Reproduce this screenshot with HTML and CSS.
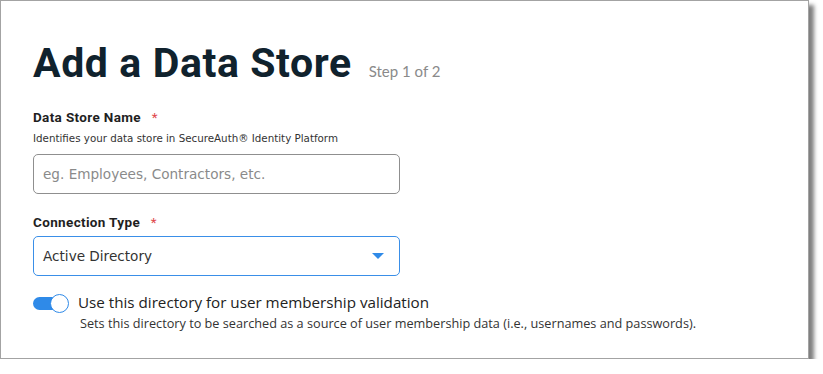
FILE: index.html
```html
<!DOCTYPE html>
<html lang="en">
<head>
    <meta charset="UTF-8">
    <title>Add a Data Store</title>
    <link rel="stylesheet" href="styles.css">
</head>
<body>
<div class="panel">
    <!-- Title -->
    <div class="title-row">
        <h1>Add a Data Store</h1>
        <span class="step">Step 1 of 2</span>
    </div>

    <!-- Name field -->
    <div class="field">
        <label class="field-label">Data Store Name <span class="req">*</span></label>
        <p class="hint">Identifies your data store in SecureAuth® Identity Platform</p>
        <div class="input">eg. Employees, Contractors, etc.</div>
    </div>

    <!-- Connection type -->
    <div class="field">
        <label class="field-label">Connection Type <span class="req">*</span></label>
        <div class="select">
            <span>Active Directory</span>
            <svg class="caret" width="12" height="6" viewBox="0 0 12 6"><path d="M0 0h12L6 6z" fill="#2f8ae8"/></svg>
        </div>
    </div>

    <!-- Membership toggle -->
    <div class="toggle-row">
        <span class="toggle"><span class="knob"></span></span>
        <div class="toggle-text">
            <div class="toggle-title">Use this directory for user membership validation</div>
            <div class="toggle-desc">Sets this directory to be searched as a source of user membership data (i.e., usernames and passwords).</div>
        </div>
    </div>
</div>
</body>
</html>
```

FILE: styles.css
```css
* { box-sizing: border-box; }
body {
  margin: 0;
  background: #fff;
  font-family: 'DejaVu Sans', sans-serif;
  color: #1b2a33;
}
/* Framed card */
.panel {
  width: 809px;
  height: 359px;
  border: 1px solid #a3a3a3;
  background: #fff;
  box-shadow: 5px 5px 4px rgba(0,0,0,0.5);
  padding: 38px 32px 0 32px;
}
.title-row {
  display: flex;
  align-items: baseline;
  gap: 17px;
  height: 48px;
}
h1 {
  margin: 0;
  font-family: Roboto, sans-serif;
  font-size: 41px;
  font-weight: bold;
  color: #10222d;
  letter-spacing: 0.6px;
}
.step {
  font-family: Lato, sans-serif;
  font-size: 15px;
  color: #8a8a8a;
}
.field { margin-top: 22px; }
.field + .field { margin-top: 20px; }
.field-label {
  display: block;
  font-family: Roboto, sans-serif;
  font-size: 13.5px;
  font-weight: bold;
  letter-spacing: 0.35px;
  color: #1f1f1f;
  height: 16px;
}
.req {
  color: #e0474c;
  font-weight: normal;
  margin-left: 7px;
}
.hint {
  margin: 7px 0 10px;
  font-size: 10.3px;
  color: #333;
}
.input, .select {
  width: 367px;
  height: 40px;
  border-radius: 5px;
  padding: 0 9px;
  display: flex;
  align-items: center;
  font-size: 13.6px;
}
.input {
  border: 1px solid #8f8f8f;
  color: #8a8a8a;
}
.select {
  margin-top: 6px;
  border: 1px solid #3a8fe8;
  color: #333;
  justify-content: space-between;
  padding-right: 15px;
}
/* Toggle switch */
.toggle-row {
  display: flex;
  gap: 9px;
  margin-top: 17px;
}
.toggle {
  position: relative;
  width: 36px;
  height: 19px;
  margin-top: 1px;
}
.toggle::before {
  content: "";
  position: absolute;
  left: 0;
  top: 3px;
  width: 30px;
  height: 13px;
  border-radius: 7px;
  background: #2f8ae8;
}
.knob {
  position: absolute;
  right: 0;
  top: 0;
  width: 19px;
  height: 19px;
  border-radius: 50%;
  background: #fff;
  border: 1.5px solid #2f8ae8;
}
.toggle-title {
  font-family: 'Open Sans', sans-serif;
  font-size: 15.2px;
  line-height: 19px;
  color: #222;
}
.toggle-desc {
  font-family: 'Open Sans', sans-serif;
  font-size: 12.7px;
  color: #333;
  margin: 2px 0 0 2px;
}
```
